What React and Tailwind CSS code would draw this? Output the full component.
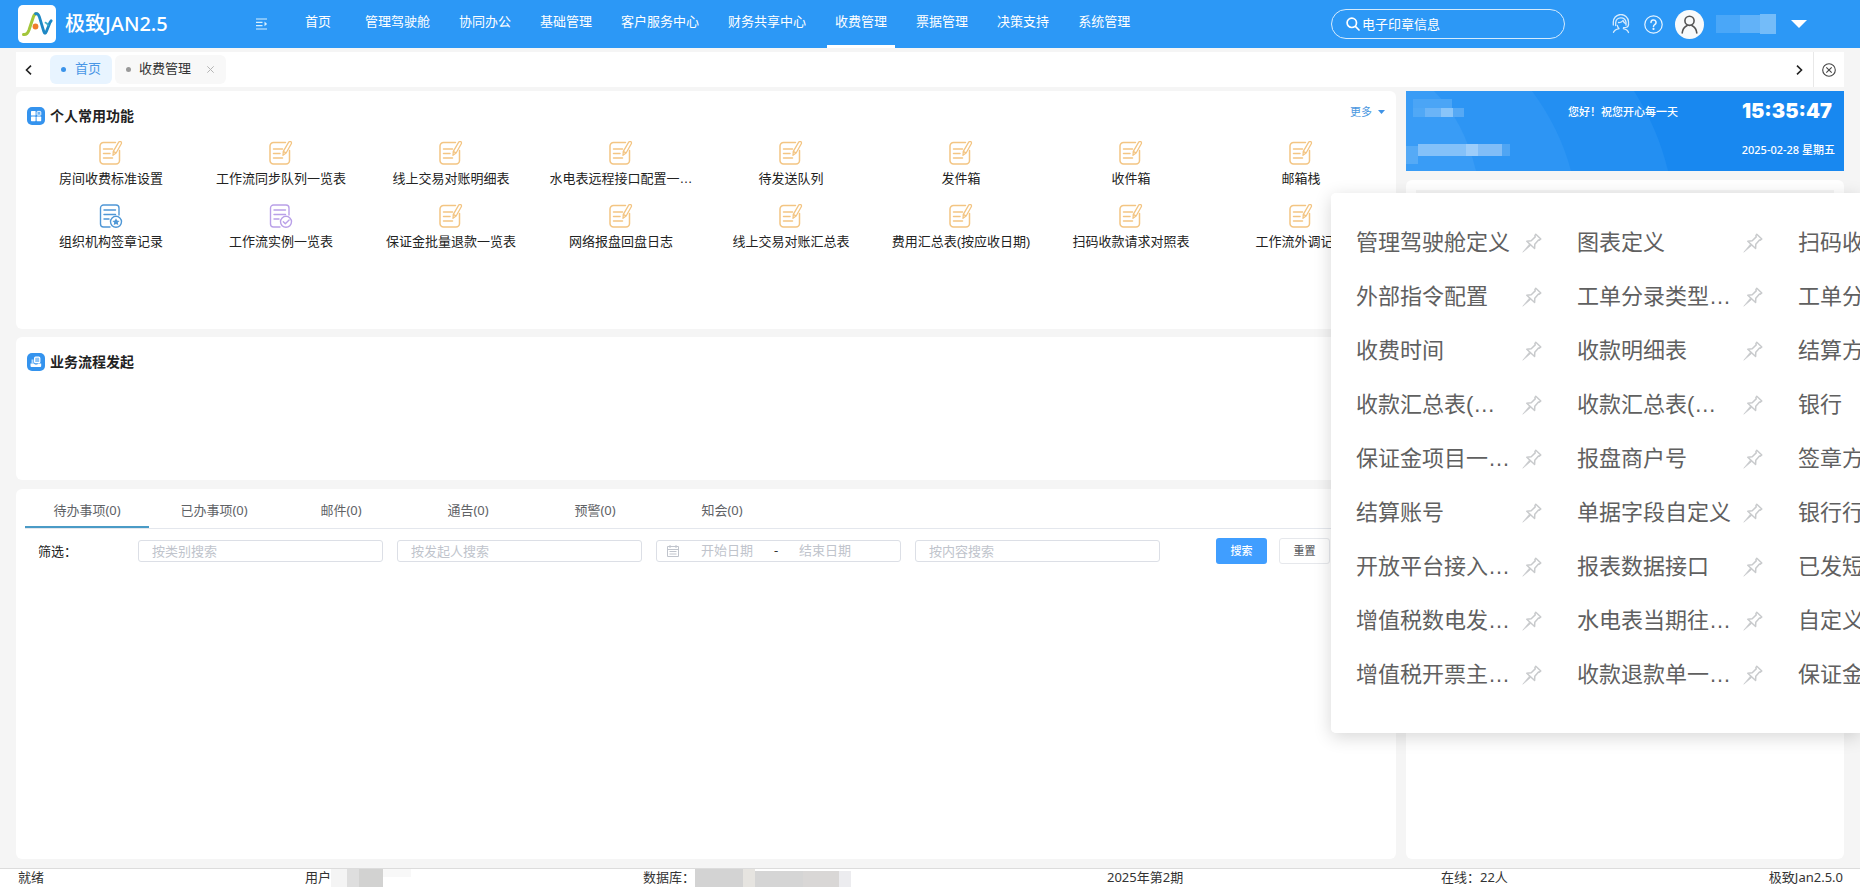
import React from "react";

const NAV = ["首页", "管理驾驶舱", "协同办公", "基础管理", "客户服务中心", "财务共享中心", "收费管理", "票据管理", "决策支持", "系统管理"];

const SHORTCUTS = [
  ["房间收费标准设置", "edit"],
  ["工作流同步队列一览表", "edit"],
  ["线上交易对账明细表", "edit"],
  ["水电表远程接口配置一…", "edit"],
  ["待发送队列", "edit"],
  ["发件箱", "edit"],
  ["收件箱", "edit"],
  ["邮箱栈", "edit"],
  ["组织机构签章记录", "star"],
  ["工作流实例一览表", "check"],
  ["保证金批量退款一览表", "edit"],
  ["网络报盘回盘日志", "edit"],
  ["线上交易对账汇总表", "edit"],
  ["费用汇总表(按应收日期)", "edit"],
  ["扫码收款请求对照表", "edit"],
  ["工作流外调记录", "edit"],
];

const TODO_TABS = ["待办事项(0)", "已办事项(0)", "邮件(0)", "通告(0)", "预警(0)", "知会(0)"];

const MENU = [
  ["管理驾驶舱定义", "图表定义", "扫码收款"],
  ["外部指令配置", "工单分录类型…", "工单分类"],
  ["收费时间", "收款明细表", "结算方式"],
  ["收款汇总表(…", "收款汇总表(…", "银行"],
  ["保证金项目一…", "报盘商户号", "签章方式"],
  ["结算账号", "单据字段自定义", "银行行号"],
  ["开放平台接入…", "报表数据接口", "已发短信"],
  ["增值税数电发…", "水电表当期往…", "自定义项"],
  ["增值税开票主…", "收款退款单一…", "保证金单"],
];

function EditIcon() {
  return (
    <svg width="24" height="24" viewBox="0 0 24 24" fill="none" stroke="#f3c583" strokeWidth="1.5" strokeLinecap="round" strokeLinejoin="round" aria-hidden="true">
      <path d="M16.5 1.5H4.500A3.500 3.500 0 0 0 1 5v14.500A3.500 3.500 0 0 0 4.500 23h12.500a3.500 3.500 0 0 0 3.500-3.500V9.500" />
      <path d="M19.700 1.200a1.500 1.500 0 0 1 2.600 1.500L17.100 12l-3.100 2.300.300-3.900zM14.300 10.400l2.600 1.500" strokeWidth="1.300" />
      <path d="M4.500 8h9M4.500 12.500h6.500M4.500 17h9" />
    </svg>
  );
}

function StarDocIcon() {
  return (
    <svg width="24" height="24" viewBox="0 0 24 24" fill="none" stroke="#4f97d6" strokeWidth="1.400" strokeLinecap="round" strokeLinejoin="round" aria-hidden="true">
      <path d="M20 11V4a3 3 0 0 0-3-3H4.500a3 3 0 0 0-3 3v16a3 3 0 0 0 3 3H11" />
      <path d="M5 6h11.500M5 10.500h11.500M5 15h5" />
      <circle cx="17" cy="17.800" r="5.500" />
      <path d="m17 14.300 1.100 2.300 2.500.3-1.800 1.700.5 2.500-2.300-1.200-2.300 1.200.5-2.500-1.800-1.700 2.500-.3z" fill="#4f97d6" stroke="none" />
    </svg>
  );
}

function CheckDocIcon() {
  return (
    <svg width="24" height="24" viewBox="0 0 24 24" fill="none" stroke="#b9a0e8" strokeWidth="1.400" strokeLinecap="round" strokeLinejoin="round" aria-hidden="true">
      <path d="M20 11V4a3 3 0 0 0-3-3H4.500a3 3 0 0 0-3 3v16a3 3 0 0 0 3 3H11" />
      <path d="M5 6h11.500M5 10.500h11.500M5 15h5" />
      <circle cx="17" cy="17.800" r="5.500" />
      <path d="m14.300 17.800 2 2 3.800-3.800" />
    </svg>
  );
}

const DOC_ICONS = { edit: EditIcon, star: StarDocIcon, check: CheckDocIcon };

function PinIcon() {
  return (
    <svg className="h-5 w-5 shrink-0" viewBox="0 0 20 20" fill="none" stroke="#c8cacc" strokeWidth="1.500" strokeLinejoin="round" strokeLinecap="round" aria-hidden="true">
      <path d="M13.800 1.300 18.800 6l-1.500 1.200-.8-.2-3.700 4.200-.2 4.300L4.800 8.300l4.400-.5 4-3.900-.3-1.300z" />
      <path d="M7.300 11.200.8 19.200l7.700-6.500z" fill="#c8cacc" strokeWidth="0.600" />
    </svg>
  );
}

function Logo() {
  return (
    <svg width="38" height="38" viewBox="0 0 38 38" fill="none" aria-hidden="true">
      <rect width="38" height="38" rx="5" fill="#fff" />
      <path d="M5.500 29.500c3 .6 4.300-1.200 5.500-4.500l4.500-13.500c.8-2.400 2-3 3.500-2.800" stroke="#a3c63b" strokeWidth="3" strokeLinecap="round" />
      <path d="M17.500 8.700c2-.6 3 .6 3.800 3l4.500 14.800c.7 2.400 1.700 2.400 2.600 0L31 20c.6-2 1.300-3.200 2.200-4.200" stroke="#1f88c4" strokeWidth="2.800" strokeLinecap="round" />
      <path d="M30 20.500c-.5-2-1.200-2.600-2.500-2.900" stroke="#3fb0c9" strokeWidth="1.800" strokeLinecap="round" />
      <circle cx="17.500" cy="21.500" r="2.900" fill="#f07d2a" />
    </svg>
  );
}

function CardTitle({ children, icon }) {
  return (
    <h2 className="flex items-center gap-[5px] text-sm leading-5 font-bold text-[#222]">
      <svg width="18" height="18" viewBox="0 0 18 18" aria-hidden="true">
        <rect width="18" height="18" rx="5" fill="#3493ee" />
        {icon === "grid" ? (
          <g fill="#fff">
            <rect x="4" y="4" width="4.600" height="4.600" rx="0.600" />
            <rect x="4" y="9.600" width="4.600" height="4.600" rx="0.600" />
            <rect x="9.600" y="9.600" width="4.600" height="4.600" rx="0.600" />
            <rect x="10" y="4.400" width="3.800" height="3.800" rx="0.600" fill="#6db3f5" stroke="#fff" strokeWidth="0.900" />
          </g>
        ) : (
          <g>
            <path d="M4.500 6.500h2v4h-2z" fill="#b8dafa" />
            <rect x="7.600" y="4.200" width="5.200" height="5.500" rx="1" fill="#8cc4f8" stroke="#fff" strokeWidth="1.200" />
            <path d="M3.500 10.500h3.500l1 1h2.200l1-1h3v2.600a1 1 0 0 1-1 1H4.500a1 1 0 0 1-1-1z" fill="#fff" />
          </g>
        )}
      </svg>
      {children}
    </h2>
  );
}

function Header() {
  return (
    <header className="flex h-12 shrink-0 items-center bg-[#2c98f6] text-[13px] text-white">
      <a href="#home" className="flex w-[238px] items-center gap-[9px] pl-[18px] text-xl font-medium">
        <Logo />
        极致JAN2.5
      </a>
      <button type="button" aria-label="折叠菜单" className="flex w-[54px] justify-start pl-[18px]">
        <svg width="12" height="12" viewBox="0 0 12 12" fill="none" stroke="#d8f0fd" strokeWidth="1.200" aria-hidden="true">
          <path d="M0 1h11M0 4.300h6.500M0 7.600h6.500M0 11h11" />
          <path d="m8.500 3.600 2.600 2.300-2.600 2.300z" fill="#d8f0fd" stroke="none" />
        </svg>
      </button>
      <nav className="flex h-12 gap-[13px]">
        {NAV.map((n) => (
          <a
            key={n}
            href={"#" + n}
            className={
              "flex min-w-[52px] justify-center border-b-[3px] px-2 pt-[11px] leading-5 whitespace-nowrap " +
              (n === "收费管理" ? "border-white" : "border-transparent")
            }
          >
            {n}
          </a>
        ))}
      </nav>
      <div className="ml-auto flex items-center pr-[53px]">
        <label className="mr-[47px] flex h-[30px] w-[234px] items-center gap-[2px] rounded-full border border-[#d5ebfd] pl-[14px]">
          <svg width="14" height="14" viewBox="0 0 14 14" fill="none" stroke="#fff" strokeWidth="1.700" strokeLinecap="round" aria-hidden="true">
            <circle cx="5.800" cy="5.800" r="4.700" />
            <path d="m9.400 9.400 3.600 3.600" />
          </svg>
          <input aria-label="搜索功能" defaultValue="电子印章信息" className="w-40 bg-transparent leading-5 outline-none" />
        </label>
        <button type="button" aria-label="客服" className="mr-[14px]">
          <svg width="18" height="20" viewBox="0 0 18 20" fill="none" stroke="#d6ebfd" strokeWidth="1.300" strokeLinecap="round" strokeLinejoin="round" aria-hidden="true">
            <path d="M1.300 11V8.500a7.600 7.600 0 0 1 15.200-.8V11" />
            <path d="M3.700 11.500V8.500a5.200 5.200 0 0 1 10.300-.3v3" />
            <path d="M6.500 8.500c2 .2 3.500-.5 4.500-2 .5 1.500 1.200 2.400 2.500 3M16.500 10.500c0 2-1.500 3.200-5 3.200" />
            <path d="M5.300 11.500c.4 1.500 1 2.500 1.700 3.100-2.800.6-4.700 1.600-5.500 3.700M11.300 14.700c2.800.6 4.500 1.700 5.200 3.800" />
          </svg>
        </button>
        <button type="button" aria-label="帮助" className="mr-3">
          <svg width="19" height="19" viewBox="0 0 19 19" fill="none" stroke="#e6f4ff" strokeWidth="1.200" strokeLinecap="round" aria-hidden="true">
            <circle cx="9.500" cy="9.500" r="8.700" />
            <path d="M7 7.400a2.500 2.500 0 1 1 3.700 2.200c-.8.500-1.200 1-1.200 2" strokeWidth="1.500" />
            <circle cx="9.500" cy="13.900" r="0.500" fill="#e6f4ff" />
          </svg>
        </button>
        <span className="mr-3 grid h-[29px] w-[29px] place-items-center rounded-full bg-[#f8fafb]">
          <svg width="17" height="19" viewBox="0 0 17 19" fill="none" stroke="#555" strokeWidth="1.600" strokeLinecap="round" aria-hidden="true">
            <circle cx="8.500" cy="5.800" r="4.600" />
            <path d="M1.200 18c.3-3.600 2-6 4.900-7.500M15.800 18c-.3-3.600-2-6-4.900-7.500" />
          </svg>
        </span>
        <span className="mr-[15px] flex h-5 w-[60px] items-center">
          <i className="h-[18px] w-6 bg-[#4aa7f8]" />
          <i className="h-[18px] w-5 bg-[#62b2f8]" />
          <i className="h-5 w-4 bg-[#74bcf9]" />
        </span>
        <button type="button" aria-label="用户菜单">
          <svg width="16" height="8" viewBox="0 0 16 8" aria-hidden="true">
            <path d="M0 0h16L8 8z" fill="#fff" />
          </svg>
        </button>
      </div>
    </header>
  );
}

function PageTabs() {
  return (
    <div className="mx-4 mt-1 flex h-[35px] shrink-0 items-center bg-white text-[13px]">
      <button type="button" aria-label="向左" className="flex w-[34px] pl-[9px]">
        <svg width="7" height="10" viewBox="0 0 7 10" fill="none" stroke="#222" strokeWidth="1.600" aria-hidden="true">
          <path d="M6 .7 1.500 5 6 9.300" />
        </svg>
      </button>
      <a href="#home" className="mr-[3px] flex h-[29px] items-center gap-[9px] rounded-md bg-[#e8f4ff] px-[11px] text-[#4a97e6]">
        <i className="h-[5px] w-[5px] rounded-full bg-[#3a93ea]" />
        <span className="pb-1 leading-5">首页</span>
      </a>
      <div className="flex h-[29px] items-center rounded-md bg-[#f8f8f8] pr-3 pl-[11px] text-[#333]">
        <i className="mr-[8px] h-[5px] w-[5px] rounded-full bg-[#999]" />
        <span className="pb-1 leading-5">收费管理</span>
        <button type="button" aria-label="关闭标签" className="ml-4">
          <svg width="7" height="7" viewBox="0 0 7 7" stroke="#b5b5b5" aria-hidden="true">
            <path d="m.3.300 6.400 6.400M6.700.300.300 6.700" />
          </svg>
        </button>
      </div>
      <button type="button" aria-label="向右" className="mr-[10px] ml-auto">
        <svg width="7" height="10" viewBox="0 0 7 10" fill="none" stroke="#222" strokeWidth="1.600" aria-hidden="true">
          <path d="M1 .7 5.500 5 1 9.300" />
        </svg>
      </button>
      <button type="button" aria-label="关闭全部" className="grid h-full w-[31px] place-items-center border-l border-[#e8e8e8]">
        <svg width="14" height="14" viewBox="0 0 14 14" fill="none" stroke="#444" strokeWidth="1.100" aria-hidden="true">
          <circle cx="7" cy="7" r="6.300" />
          <path d="m4.300 4.300 5.400 5.400M9.700 4.300 4.300 9.700" />
        </svg>
      </button>
    </div>
  );
}

const FIELD = "h-[22px] w-[245px] rounded-[3px] border border-[#dcdfe6] bg-white text-[13px] placeholder-[#c0c4cc] outline-none";

function Banner() {
  return (
    <section className="relative h-20 shrink-0 bg-[#1888f0] text-[11px] text-white">
      <svg className="absolute inset-0 h-full w-full" viewBox="0 0 438 80" preserveAspectRatio="none" aria-hidden="true">
        <path d="M0 0h228q24 38 34 80H0z" fill="#238ff2" />
        <path d="M0 0h126q28 38 39 80H0z" fill="#2d95f4" />
        <path d="M0 0h28q30 30 42 80H0z" fill="#399cf6" />
      </svg>
      <div className="relative flex h-full flex-col justify-between pt-2 pb-[7px]">
        <div className="flex items-start pr-[9px]">
          <span className="ml-[7px] grid h-[18px] w-[51px] grid-rows-2">
            <i className="mr-3 bg-[#4ba5f6]" />
            <span className="flex">
              <i className="w-3 bg-[#50a8f6]" />
              <i className="w-4 bg-[#6bb4f7]" />
              <i className="w-3 bg-[#8ac5f9]" />
              <i className="w-[11px] bg-[#56a9f5]" />
            </span>
          </span>
          <span className="mr-16 ml-auto leading-[26px] font-medium">您好！祝您开心每一天</span>
          <time className="w-[93px] font-['Inter','Liberation_Sans',sans-serif] text-xl leading-6 font-black">15:35:47</time>
        </div>
        <div className="flex items-start justify-between pr-[9px]">
          <span className="flex h-5 items-start">
            <i className="mt-[2px] h-[18px] w-3 bg-[#55aaf6]" />
            <i className="h-3 w-12 bg-[#84c1f9]" />
            <i className="h-3 w-3 bg-[#9dcdfa]" />
            <i className="h-3 w-6 bg-[#81bdf7]" />
            <i className="h-3 w-2 bg-[#4fa5f4]" />
          </span>
          <time className="leading-3 font-medium">2025-02-28 星期五</time>
        </div>
      </div>
    </section>
  );
}

function MenuPopup() {
  return (
    <div className="absolute top-[193px] right-0 h-[540px] w-[529px] overflow-hidden rounded-l-[5px] bg-white pt-[23px] pl-[25px]">
      <ul className="font-['Liberation_Sans','Noto_Sans_CJK_SC',sans-serif]">
        {MENU.map((row) => (
          <li key={row.join()} className="flex h-[54px] items-center">
            {row.map((name, i) => (
              <a key={i} href="#item" className="flex w-[221px] shrink-0 items-center text-[22px] leading-8 text-[#606060]">
                <span className="w-[166px] whitespace-nowrap">{name}</span>
                <PinIcon />
              </a>
            ))}
          </li>
        ))}
      </ul>
    </div>
  );
}

export default function App() {
  return (
    <div
      lang="zh-CN"
      className="relative flex min-h-screen flex-col overflow-hidden bg-[#f5f5f5] font-['Noto_Sans','Noto_Sans_CJK_SC',sans-serif] text-[13px] text-[#333]"
    >
      <Header />
      <PageTabs />
      <main className="mx-4 mt-1 mb-[9px] flex flex-1 gap-[10px]">
        <div className="flex min-w-0 flex-1 flex-col">
          <section className="h-[238px] rounded-md bg-white px-[10px] pt-[15px]">
            <div className="flex items-start justify-between pr-[1px] pl-[1px]">
              <CardTitle icon="grid">个人常用功能</CardTitle>
              <button type="button" className="flex items-center gap-[6px] text-[11px] leading-3 text-[#4a97e0]">
                更多
                <svg width="7" height="4" viewBox="0 0 7 4" aria-hidden="true">
                  <path d="M0 0h7L3.500 4z" fill="#3f93e6" />
                </svg>
              </button>
            </div>
            <ul className="mt-[15px] grid grid-cols-8 font-['Liberation_Sans','Noto_Sans_CJK_SC',sans-serif]">
              {SHORTCUTS.map(([name, kind]) => {
                const Icon = DOC_ICONS[kind];
                return (
                  <li key={name} className="h-[63px]">
                    <a href="#shortcut" className="flex flex-col items-center gap-1 leading-5 whitespace-nowrap text-[#222]">
                      <Icon />
                      {name}
                    </a>
                  </li>
                );
              })}
            </ul>
          </section>

          <section className="mt-2 h-[143px] rounded-md bg-white px-[11px] pt-[15px]">
            <CardTitle icon="tray">业务流程发起</CardTitle>
          </section>

          <section className="mt-[9px] flex-1 rounded-md bg-white px-[9px] pt-1">
            <div className="flex h-9 gap-[3px] border-b border-[#e4e7ed] text-[#606266]">
              {TODO_TABS.map((t, i) => (
                <button
                  key={t}
                  type="button"
                  className={"w-[124px] border-b-2 leading-8 " + (i === 0 ? "border-[#4a9bc6]" : "border-transparent")}
                >
                  {t}
                </button>
              ))}
            </div>
            <form className="mt-[9px] flex items-center gap-[14px] pl-[13px]" onSubmit={(e) => e.preventDefault()}>
              <span className="w-[86px] leading-5 text-[#222]">筛选：</span>
              <input aria-label="类别" placeholder="按类别搜索" className={FIELD + " px-[13px]"} />
              <input aria-label="发起人" placeholder="按发起人搜索" className={FIELD + " px-[13px]"} />
              <div className={FIELD + " flex items-center pl-[10px]"}>
                <svg width="12" height="12" viewBox="0 0 12 12" fill="none" stroke="#c0c4cc" aria-hidden="true">
                  <path d="M.5 1.500h11v10H.5zM.5 4.500h11M3 0v3M9 0v3M2.500 6.500h7M2.500 9h7" />
                </svg>
                <input aria-label="开始日期" placeholder="开始日期" className="ml-[22px] w-[73px] placeholder-[#c0c4cc] outline-none" />
                <span className="w-[25px] text-[#333]">-</span>
                <input aria-label="结束日期" placeholder="结束日期" className="w-[72px] placeholder-[#c0c4cc] outline-none" />
              </div>
              <input aria-label="内容" placeholder="按内容搜索" className={FIELD + " px-[13px]"} />
              <div className="ml-[42px] flex gap-3">
                <button type="submit" className="h-[26px] w-[51px] rounded-[3px] bg-[#409eff] text-[11px] font-medium text-white">
                  搜索
                </button>
                <button type="button" className="h-[26px] w-[51px] rounded-[3px] border border-[#e6e8ec] text-[11px] font-medium text-[#606266]">
                  重置
                </button>
              </div>
            </form>
          </section>
        </div>

        <aside className="flex w-[438px] flex-col gap-[9px]">
          <Banner />
          <section className="flex-1 rounded-md bg-white p-[10px]">
            <div className="h-8 bg-[#f5f5f5]" />
          </section>
        </aside>
      </main>

      <footer className="flex h-5 shrink-0 border-t border-[#dcdcdc] bg-white pr-[17px] pl-[18px] leading-4">
        <div className="grid flex-1 grid-cols-[287fr_338fr_464fr_334fr_402fr]">
          <span>就绪</span>
          <span className="flex">
            用户
            <i className="h-[18px] w-4 bg-[#f4f4f4]" />
            <i className="h-[18px] w-3 bg-[#dedede]" />
            <i className="h-[18px] w-6 bg-[#d2d2d1]" />
            <i className="h-[8px] w-7 bg-[#f8f8f8]" />
          </span>
          <span className="flex">
            数据库：
            <i className="h-[18px] w-12 bg-[#d3d3d3]" />
            <i className="h-[18px] w-3 bg-[#e6e4e0]" />
            <i className="mt-[2px] h-[16px] w-12 bg-[#d5d5d5]" />
            <i className="mt-[2px] h-[16px] w-9 bg-[#d9d7d6]" />
            <i className="mt-[2px] h-[16px] w-3 bg-[#ececef]" />
          </span>
          <span>2025年第2期</span>
          <span className="flex justify-between">
            <span>在线：22人</span>
            <span>极致Jan2.5.0</span>
          </span>
        </div>
      </footer>

      <div className="absolute top-[193px] right-0 h-[540px] w-[529px] rounded-l-[5px] shadow-[0_4px_18px_rgba(0,0,0,0.16)]" />
      <MenuPopup />
    </div>
  );
}
